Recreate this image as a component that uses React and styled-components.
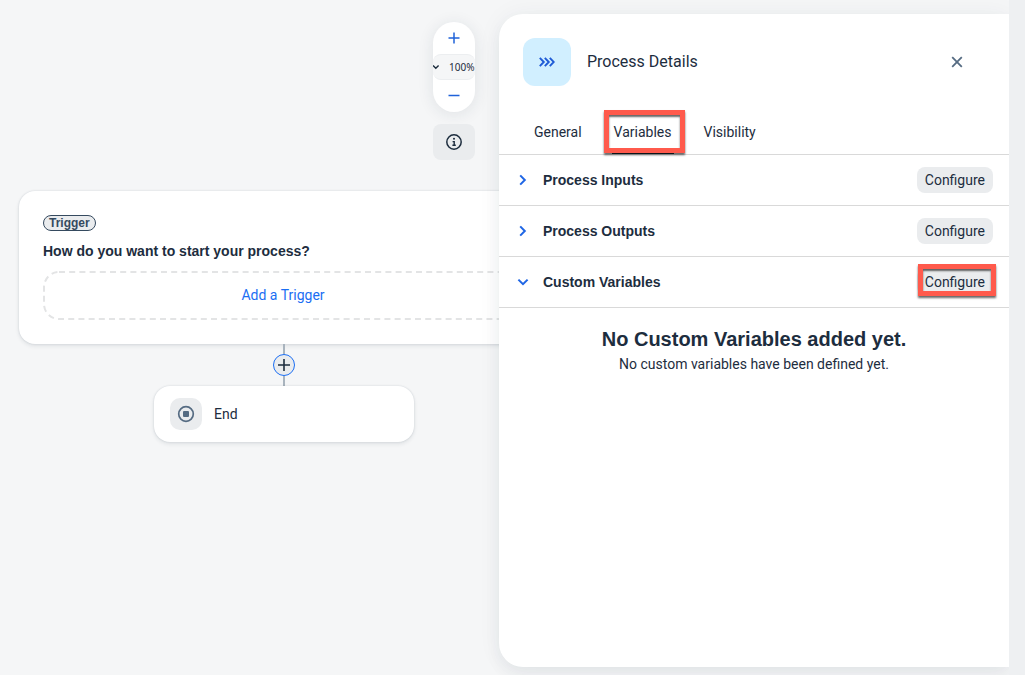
import React from "react";
import styled, { createGlobalStyle } from "styled-components";

const boldFamily = `"Liberation Sans", Arial, sans-serif`;

const GlobalStyle = createGlobalStyle`
  *, *::before, *::after { box-sizing: border-box; }
  body {
    margin: 0;
    background: #f5f6f7;
    color: #1d2d3e;
    font-family: Roboto, "Liberation Sans", sans-serif;
    font-size: 14px;
    line-height: 20px;
  }
  button, select { font: inherit; color: inherit; margin: 0; }
  h1, h2, h3, p { margin: 0; }
`;

const Page = styled.div`
  display: grid;
  grid-template-columns: minmax(0, 499fr) minmax(0, 510fr) 16px;
  min-height: 100vh;
  overflow: hidden;
`;

const Canvas = styled.main`
  display: flex;
  flex-direction: column;
  padding: 22px 0 0 19px;
  overflow: hidden;
`;

const Tools = styled.div`
  display: flex;
  flex-direction: column;
  gap: 12px;
  width: 42px;
  margin: 0 24px 31px auto;
`;

const ZoomControl = styled.div`
  display: flex;
  flex-direction: column;
  height: 90px;
  border-radius: 21px;
  background: #fff;
  overflow: hidden;
  box-shadow: 0 2px 16px rgba(34, 53, 72, 0.1);
`;

const ZoomButton = styled.button`
  display: grid;
  place-items: center;
  flex: 1;
  padding: 0;
  border: 0;
  background: none;
  color: #1f62d9;
`;

const ZoomLevel = styled.label`
  display: flex;
  align-items: center;
  justify-content: space-between;
  height: 26px;
  border: 1px solid #eceef0;
  border-width: 1px 0;
  border-radius: 8px;
  background: #f5f6f7;
`;

const ZoomSelect = styled.select`
  appearance: none;
  width: 26px;
  padding: 0;
  border: 0;
  background: none;
  font-family: "Noto Sans", sans-serif;
  font-size: 10px;
  line-height: 14px;
`;

const InfoButton = styled.button`
  display: grid;
  place-items: center;
  height: 36px;
  padding: 0;
  border: 0;
  border-radius: 8px;
  background: #eaecee;
`;

const Flow = styled.div`
  display: flex;
  flex-direction: column;
  align-items: center;
  width: 530px;
`;

const Card = styled.section`
  border-radius: 16px;
  background: #fff;
  box-shadow: 0 0 2px rgba(34, 53, 72, 0.16), 0 2px 4px rgba(34, 53, 72, 0.1);
`;

const TriggerCard = styled(Card)`
  display: flex;
  flex-direction: column;
  align-items: flex-start;
  width: 100%;
  padding: 24px;
`;

const Badge = styled.span`
  padding: 0 5px;
  border: 1px solid #354a5f;
  border-radius: 8px;
  background: #eaecee;
  color: #354a5f;
  font-family: ${boldFamily};
  font-size: 12px;
  font-weight: 700;
  line-height: 14px;
`;

const CardTitle = styled.h2`
  margin: 10px 0;
  font-family: ${boldFamily};
  font-size: 14px;
  line-height: 20px;
`;

const AddTrigger = styled.button`
  position: relative;
  width: 100%;
  height: 49px;
  padding: 0 2px 2px 0;
  border: 0;
  background: none;
  color: #1b6ef3;
`;

const DashedFrame = styled.svg`
  position: absolute;
  inset: 0;
  width: 100%;
  height: 100%;
`;

const Connector = styled.div`
  display: flex;
  flex-direction: column;
  align-items: center;
`;

const Line = styled.span`
  width: 2px;
  height: 10px;
  background: #a9b4be;
`;

const AddStep = styled.button`
  display: grid;
  place-items: center;
  width: 22px;
  height: 22px;
  padding: 0;
  border: 1px solid #1b6ef3;
  border-radius: 50%;
  background: #eaecee;
`;

const EndCard = styled(Card)`
  display: flex;
  align-items: center;
  gap: 12px;
  width: 260px;
  height: 56px;
  padding: 0 16px;
`;

const StepIcon = styled.span`
  display: grid;
  place-items: center;
  width: 32px;
  height: 32px;
  border-radius: 10px;
  background: #eaecee;
`;

const Panel = styled.aside`
  position: relative;
  margin: 14px 0 8px;
  border-radius: 24px 0 0 24px;
  background: #fff;
  box-shadow: 0 8px 16px rgba(34, 53, 72, 0.06), 0 0 24px rgba(34, 53, 72, 0.05);
`;

const Gutter = styled.div`
  position: relative;
  background: #eef0f2;
`;

const PanelHeader = styled.header`
  display: flex;
  align-items: center;
  gap: 16px;
  padding: 24px 36px 0 24px;
`;

const ProcessIcon = styled.span`
  display: grid;
  place-items: center;
  width: 48px;
  height: 48px;
  border-radius: 12px;
  background: #d1efff;
`;

const PanelTitle = styled.h1`
  flex: 1;
  font-size: 16px;
  font-weight: 400;
`;

const CloseButton = styled.button`
  display: grid;
  place-items: center;
  width: 32px;
  height: 32px;
  padding: 0;
  border: 0;
  background: none;
`;

const Tabs = styled.div`
  display: flex;
  gap: 10px;
  height: 69px;
  padding: 24px 24px 0;
  border-bottom: 1px solid #d9d9d9;
`;

const Tab = styled.button`
  position: relative;
  padding: 0 11px;
  border: 0;
  background: none;

  &::after {
    content: "";
    position: absolute;
    right: 9px;
    bottom: 0;
    left: 9px;
    height: 3px;
    background: ${(p) => (p["aria-selected"] ? "#1d2d3e" : "transparent")};
  }
`;

const Highlight = styled.span`
  position: absolute;
  inset: ${(p) => p.$inset};
  z-index: 1;
  border: 5px solid #ff5a4c;
  box-shadow: 0 2px 2px rgba(0, 0, 0, 0.6), inset 0 2px 2px rgba(0, 0, 0, 0.6);
  pointer-events: none;
`;

const Section = styled.div`
  display: flex;
  align-items: center;
  gap: 12px;
  height: 51px;
  padding: 0 16px;
  border-bottom: 1px solid #d9d9d9;
`;

const Toggle = styled.button`
  display: grid;
  place-items: center;
  width: 16px;
  height: 16px;
  padding: 0;
  border: 0;
  background: none;
  color: #1f66e5;
`;

const SectionTitle = styled.h2`
  flex: 1;
  font-family: ${boldFamily};
  font-size: 14px;
  line-height: 20px;
`;

const ConfigureButton = styled.button`
  position: relative;
  height: 26px;
  padding: 0 8px;
  border: 0;
  border-radius: 8px;
  background: #eaecee;
`;

const Empty = styled.div`
  padding: 18px 0;
  text-align: center;
`;

const EmptyTitle = styled.h3`
  margin-bottom: 2px;
  font-family: ${boldFamily};
  font-size: 20px;
  line-height: 26px;
`;

const Stroke = ({ d, size = 16, width = 2, color = "currentColor" }) => (
  <svg width={size} height={size} viewBox={`0 0 ${size} ${size}`} fill="none" stroke={color} strokeWidth={width} aria-hidden="true">
    <path d={d} />
  </svg>
);

const chevrons = {
  closed: "M5.2 3.4 9.8 8 5.2 12.6",
  open: "M3.4 5.6 8 10.2 12.6 5.6",
};

const sections = [
  { name: "Process Inputs", open: false },
  { name: "Process Outputs", open: false },
  { name: "Custom Variables", open: true, marked: true },
];

const tabs = ["General", "Variables", "Visibility"];

export default function App() {
  return (
    <>
      <GlobalStyle />
      <Page>
        <Canvas>
          <Tools>
            <ZoomControl>
              <ZoomButton aria-label="Zoom in">
                <Stroke d="M8 2.5v11M2.5 8h11" width={1.5} />
              </ZoomButton>
              <ZoomLevel>
                <Stroke d="M0 2.5 2.8 5.3 5.6 2.5" size={8} width={1.4} />
                <ZoomSelect aria-label="Zoom level" defaultValue="100%">
                  <option>100%</option>
                </ZoomSelect>
              </ZoomLevel>
              <ZoomButton aria-label="Zoom out">
                <Stroke d="M2.5 7.5h11" width={1.5} />
              </ZoomButton>
            </ZoomControl>
            <InfoButton aria-label="Information">
              <svg width="16" height="16" viewBox="0 0 16 16" fill="none" stroke="#1d2d3e" aria-hidden="true">
                <circle cx="8" cy="8" r="7.2" strokeWidth="1.5" />
                <path d="M6.6 7.6h1.6v3.8M6.4 11.3h3.4" strokeWidth="1.4" />
                <circle cx="8" cy="4.8" r="1" fill="#1d2d3e" stroke="none" />
              </svg>
            </InfoButton>
          </Tools>

          <Flow>
            <TriggerCard>
              <Badge>Trigger</Badge>
              <CardTitle>How do you want to start your process?</CardTitle>
              <AddTrigger>
                <DashedFrame viewBox="0 0 482 49" preserveAspectRatio="none" fill="none" aria-hidden="true">
                  <rect x="1" y="1" width="480" height="47" rx="15" stroke="#e3e4e5" strokeWidth="2" strokeDasharray="6 4.2" />
                </DashedFrame>
                Add a Trigger
              </AddTrigger>
            </TriggerCard>
            <Connector>
              <Line />
              <AddStep aria-label="Add step">
                <Stroke d="M8 2v12M2 8h12" width={1.6} />
              </AddStep>
              <Line />
            </Connector>
            <EndCard>
              <StepIcon>
                <svg width="18" height="18" viewBox="0 0 18 18" aria-hidden="true">
                  <circle cx="9" cy="9" r="7.3" fill="none" stroke="#556b82" strokeWidth="1.7" />
                  <rect x="6" y="6" width="6" height="6" rx="1" fill="#556b82" />
                </svg>
              </StepIcon>
              End
            </EndCard>
          </Flow>
        </Canvas>

        <Panel>
          <PanelHeader>
            <ProcessIcon>
              <Stroke d="M0.8 3.8 4.8 8 0.8 12.2M5.8 3.8 9.8 8 5.8 12.2M10.8 3.8 14.8 8 10.8 12.2" color="#1f5bd6" width={1.9} />
            </ProcessIcon>
            <PanelTitle>Process Details</PanelTitle>
            <CloseButton aria-label="Close">
              <Stroke d="M3.2 3.2l9.6 9.6M12.8 3.2l-9.6 9.6" color="#556b82" width={1.8} />
            </CloseButton>
          </PanelHeader>
          <Tabs role="tablist">
            {tabs.map((name) => (
              <Tab key={name} role="tab" aria-selected={name === "Variables"}>
                {name}
                {name === "Variables" && <Highlight $inset="0 -2px 1px 1px" />}
              </Tab>
            ))}
          </Tabs>
          {sections.map(({ name, open, marked }) => (
            <Section key={name}>
              <Toggle aria-expanded={open} aria-label={name}>
                <Stroke d={open ? chevrons.open : chevrons.closed} />
              </Toggle>
              <SectionTitle>{name}</SectionTitle>
              <ConfigureButton>
                Configure
                {marked && <Highlight $inset="-5px -3px -1px 1px" />}
              </ConfigureButton>
            </Section>
          ))}
          <Empty>
            <EmptyTitle>No Custom Variables added yet.</EmptyTitle>
            <p>No custom variables have been defined yet.</p>
          </Empty>
        </Panel>
        <Gutter />
      </Page>
    </>
  );
}
